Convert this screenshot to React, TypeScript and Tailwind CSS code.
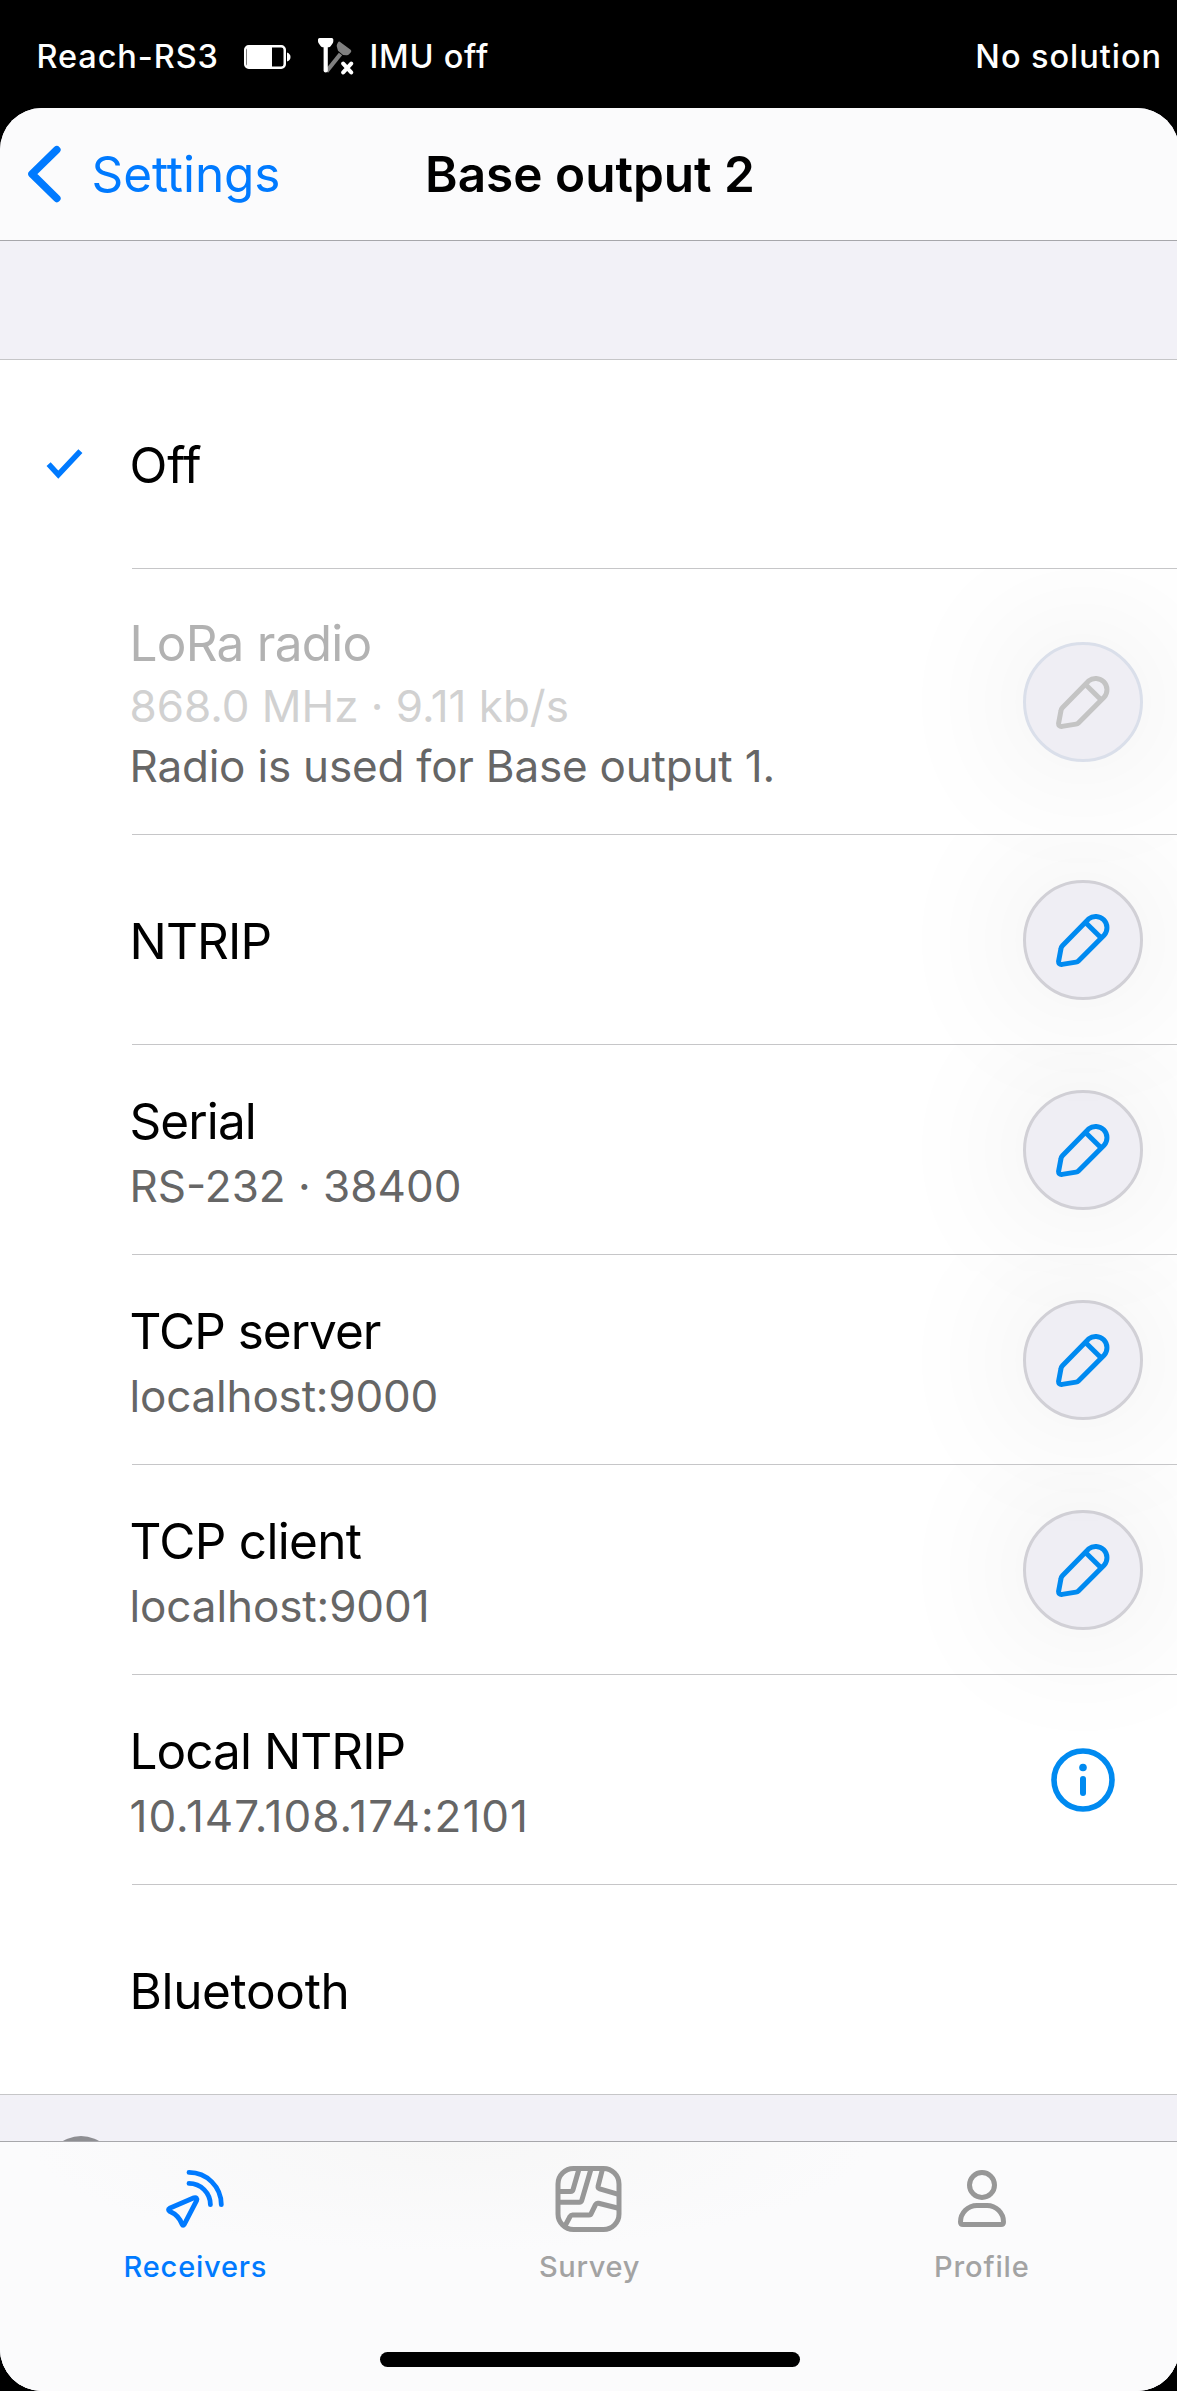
import React from "react";
import clsx from "clsx";

type OutputItem = {
  title: string;
  tracking: string;
  subtitle?: string;
  subtitleTracking?: string;
  note?: string;
  action?: "edit" | "info";
  selected?: boolean;
  disabled?: boolean;
};

const outputs: OutputItem[] = [
  { title: "Off", tracking: "tracking-[-0.2px]", selected: true },
  {
    title: "LoRa radio",
    tracking: "tracking-[-0.75px]",
    subtitle: "868.0 MHz · 9.11 kb/s",
    subtitleTracking: "tracking-[-0.03px]",
    note: "Radio is used for Base output 1.",
    action: "edit",
    disabled: true,
  },
  { title: "NTRIP", tracking: "tracking-[-0.85px]", action: "edit" },
  {
    title: "Serial",
    tracking: "tracking-[-0.9px]",
    subtitle: "RS-232 · 38400",
    subtitleTracking: "tracking-[0px]",
    action: "edit",
  },
  {
    title: "TCP server",
    tracking: "tracking-[-1px]",
    subtitle: "localhost:9000",
    subtitleTracking: "tracking-[-0.18px]",
    action: "edit",
  },
  {
    title: "TCP client",
    tracking: "tracking-[-0.7px]",
    subtitle: "localhost:9001",
    subtitleTracking: "tracking-[-0.1px]",
    action: "edit",
  },
  {
    title: "Local NTRIP",
    tracking: "tracking-[-0.95px]",
    subtitle: "10.147.108.174:2101",
    subtitleTracking: "tracking-[1px]",
    action: "info",
  },
  { title: "Bluetooth", tracking: "tracking-[-0.35px]" },
];

function BatteryIcon() {
  return (
    <svg width="48" height="24" viewBox="0 0 48 24" fill="none">
      <rect x="1.25" y="1.25" width="39.5" height="21.5" rx="3.5" stroke="white" strokeWidth="2.5" />
      <path d="M3 1H28V23H3Z" fill="white" />
      <path d="M43 7.5C45.5 8.5 46.5 10 46.5 12S45.5 15.5 43 16.5Z" fill="white" />
    </svg>
  );
}

function ImuOffIcon() {
  return (
    <svg width="38" height="42" viewBox="0 0 38 42" fill="none">
      <path d="M10.5 35.5L24.5 18" stroke="#808080" strokeWidth="4.2" />
      <path
        d="M23.8 5.8L34.6 13.8Q36 15 34.9 16.3L32.8 18.6Q31.8 19.4 30.5 19.2L27 18.9L22 14.8L20.8 10.5Q20.5 9 21.2 8L22 6.4Q22.8 5.2 23.8 5.8Z"
        fill="#808080"
      />
      <path d="M9.7 8V34.5" stroke="white" strokeWidth="4.2" strokeLinecap="round" />
      <path
        d="M3.6 2H15.8Q17.3 2 17.3 3.5V5.2Q17.3 6.6 16.4 7.8L14.6 10.2Q13.8 11.2 12.6 11.2H6.8Q5.6 11.2 4.8 10.2L3 7.8Q2 6.6 2 5.2V3.5Q2 2 3.6 2Z"
        fill="white"
      />
      <path
        d="M27.2 27.6L35.2 36.4M35.2 27.6L27.2 36.4"
        stroke="white"
        strokeWidth="4"
        strokeLinecap="round"
      />
    </svg>
  );
}

function PencilIcon() {
  return (
    <svg width="54" height="54" viewBox="0 0 54 54" fill="none" stroke="currentColor" strokeWidth="5">
      <path
        d="M5 35.5Q5.2 33.9 6.4 32.7L32.6 5.9A11.3 11.3 0 0 1 48.3 22L22.4 47.9Q21.4 48.9 20 49.1L6 51.4Q2.4 51.8 2.6 48.2Z"
        strokeLinejoin="round"
      />
      <path d="M30 10L44.5 24.3" />
    </svg>
  );
}

function InfoIcon() {
  return (
    <svg width="64" height="64" viewBox="0 0 64 64" fill="none">
      <circle cx="32" cy="32" r="29" stroke="currentColor" strokeWidth="5.6" />
      <circle cx="32" cy="19.5" r="3.8" fill="currentColor" />
      <path d="M32 31V45" stroke="currentColor" strokeWidth="6" strokeLinecap="round" />
    </svg>
  );
}

function ReceiversIcon() {
  return (
    <svg
      width="72"
      height="72"
      viewBox="0 0 72 72"
      fill="none"
      stroke="currentColor"
      strokeWidth="4.8"
      strokeLinecap="round"
      strokeLinejoin="round"
    >
      <path d="M29 9.4A32.3 32.3 0 0 1 61.3 41.7" />
      <path d="M29 20.4A21.4 21.4 0 0 1 50.4 41.7" />
      <path d="M9.6 45.3L34 34.8Q37.6 34 36.6 37.6L24.4 61.2Q23 63.4 22 61.2Q19 52.5 9.6 48.3Q7.4 46.6 9.6 45.3Z" />
    </svg>
  );
}

function SurveyIcon() {
  return (
    <svg
      width="72"
      height="72"
      viewBox="0 0 72 72"
      fill="none"
      stroke="currentColor"
      strokeWidth="5"
      strokeLinejoin="round"
    >
      <rect x="6" y="5.5" width="61" height="61" rx="15.5" />
      <path d="M6.5 28.5H18.8Q20.5 28.5 21 26.8L27 6" />
      <path d="M6.5 39.3H27.5Q29.2 39.3 29.7 37.6L39 6" />
      <path d="M50.5 6L46.1 23.2Q45.8 25.2 47.7 25.8L66.5 31.3" />
      <path d="M13 63L18 53.5Q18.9 52 20.5 52H37Q38.8 52 39.4 50.2L43.5 41.6Q44.5 39.8 46.5 40.3L66.5 45.2" />
    </svg>
  );
}

function ProfileIcon() {
  return (
    <svg width="72" height="72" viewBox="0 0 72 72" fill="none" stroke="currentColor" strokeWidth="5">
      <circle cx="37" cy="22" r="12.5" />
      <path d="M32 42.5H42A16.5 16.5 0 0 1 58.5 59Q58.5 61.5 56 61.5H18Q15.5 61.5 15.5 59A16.5 16.5 0 0 1 32 42.5Z" />
    </svg>
  );
}

function OutputRow({ item, order, last }: { item: OutputItem; order: number; last: boolean }) {
  const stacked = Boolean(item.subtitle);

  return (
    <div
      className={clsx("relative flex flex-col bg-white", item.note ? "h-[266px]" : order === 0 ? "h-[209px]" : "h-[210px]")}
      style={{ zIndex: outputs.length - order }}
    >
      <div className="flex flex-1 items-center overflow-visible">
        <div className="w-[129.5px] shrink-0 pl-[46px]">
          {item.selected && (
            <svg width="37" height="30" viewBox="0 0 37 30" fill="none">
              <path d="M2.6 15.2L12.3 25.6L34.4 2.2" stroke="#007aff" strokeWidth="5.6" />
            </svg>
          )}
        </div>

        <div
          className={clsx(
            "flex flex-1 flex-col whitespace-pre",
            !stacked && (item.selected ? "pt-px" : "pt-[3px]"),
            stacked && (item.note ? "self-start pt-[44px]" : "self-start pt-[46px]")
          )}
        >
          <p
            className={clsx(
              "text-[49.5px] leading-[60px]",
              item.tracking,
              item.disabled ? "text-[#b2b2b2]" : "text-black"
            )}
          >
            {item.title}
          </p>
          {item.subtitle && (
            <p
              className={clsx(
                "text-[44px] leading-[54px]",
                item.subtitleTracking,
                item.disabled ? "mt-[6px] text-[#d1d1d1]" : "mt-[8px] text-[#666666]"
              )}
            >
              {item.subtitle}
            </p>
          )}
          {item.note && (
            <p className="mt-[6px] text-[44px] leading-[54px] tracking-[-0.2px] text-[#666666]">{item.note}</p>
          )}
        </div>

        {item.action === "edit" && (
          <button
            className={clsx(
              "mr-[36px] flex h-[120px] w-[120px] items-center justify-center rounded-full border-[3px] bg-[#efeef4] shadow-[0_0_140px_8px_rgba(0,0,0,0.085)]",
              item.disabled ? "border-[#dadfea] text-[#c4c4c4]" : "border-[#d1d0d6] text-[#008af0]"
            )}
          >
            <PencilIcon />
          </button>
        )}
        {item.action === "info" && (
          <button className="mr-[64px] rounded-full text-[#008af0]">
            <InfoIcon />
          </button>
        )}
      </div>
      <div className={clsx("h-px shrink-0 bg-[#c6c6c8]", !last && "ml-[132px]")} />
    </div>
  );
}

function Tab({ icon, label, active, tracking }: { icon: React.ReactNode; label: string; active?: boolean; tracking: string }) {
  return (
    <div className={clsx("flex flex-col items-center", active ? "text-[#007aff]" : "text-[#979797]")}>
      {icon}
      <span
        className={clsx("mt-[13.5px] text-[29px] font-medium leading-[36px]", tracking, !active && "pl-[2px] text-[#a3a3a3]")}
      >
        {label}
      </span>
    </div>
  );
}

export default function App() {
  return (
    <div className="flex h-[2391px] w-[1177px] flex-col overflow-hidden bg-black font-['Inter',sans-serif]">
      {/* Receiver status */}
      <div className="flex h-[108px] shrink-0 items-start pl-[36.5px] pr-[15px] pt-[36.5px] text-[32.5px] font-[550] leading-[40px] text-white">
        <span className="w-[207.5px] tracking-[0.9px]">Reach-RS3</span>
        <div className="mt-[8.5px] w-[72px]">
          <BatteryIcon />
        </div>
        <div className="-mt-[0.5px] w-[53.5px]">
          <ImuOffIcon />
        </div>
        <span className="tracking-[0.75px]">IMU off</span>
        <span className="ml-auto tracking-[0.95px]">No solution</span>
      </div>

      <div className="flex w-[1179px] flex-1 flex-col overflow-hidden rounded-[42px] bg-[#f2f1f7]">
        {/* Navigation bar */}
        <div className="flex h-[133px] shrink-0 items-start border-b border-[#a7a7ab] bg-[#fbfbfc] pt-[36px] text-[49.5px] leading-[60px]">
          <svg className="ml-[27px] mt-[1px]" width="34" height="58" viewBox="0 0 34 58" fill="none">
            <path
              d="M29.8 4.8L5 29L29.8 53.4"
              stroke="#007aff"
              strokeWidth="7.6"
              strokeLinecap="round"
              strokeLinejoin="round"
            />
          </svg>
          <span className="ml-[30.5px] w-[333.5px] tracking-[-0.08px] text-[#007aff]">Settings</span>
          <h1 className="font-semibold text-black">Base output 2</h1>
        </div>

        <div className="h-[119px] shrink-0 border-b border-[#c6c6c8]" />

        {/* Output list, earlier rows stay above the shadows of later ones */}
        <div className="isolate shrink-0">
          {outputs.map((item, i) => (
            <OutputRow key={item.title} item={item} order={i} last={i === outputs.length - 1} />
          ))}
        </div>

        {/* Footer hint cut off by the tab bar */}
        <div className="h-[46px] shrink-0 overflow-hidden bg-[#f2f1f7] pl-[46px] pt-[41px]">
          <div className="h-[70px] w-[70px] rounded-full bg-[#8e8e92]" />
        </div>

        {/* Tab bar */}
        <div className="relative flex flex-1 flex-col border-t border-[#a7a7ab] bg-[#fbfbfc] bg-[radial-gradient(ellipse_420px_110px_at_450px_0px,#f7f7f7,#fbfbfc)]">
          <div className="grid w-[1177px] grid-cols-3 pt-[21px]">
            <Tab icon={<ReceiversIcon />} label="Receivers" tracking="tracking-[0.8px] pr-[1.5px]" active />
            <Tab icon={<SurveyIcon />} label="Survey" tracking="tracking-[0.65px]" />
            <Tab icon={<ProfileIcon />} label="Profile" tracking="tracking-[0.9px]" />
          </div>
          <div className="ml-[380px] mt-[67.5px] h-[15px] w-[420px] rounded-full bg-black" />
        </div>
      </div>
    </div>
  );
}
